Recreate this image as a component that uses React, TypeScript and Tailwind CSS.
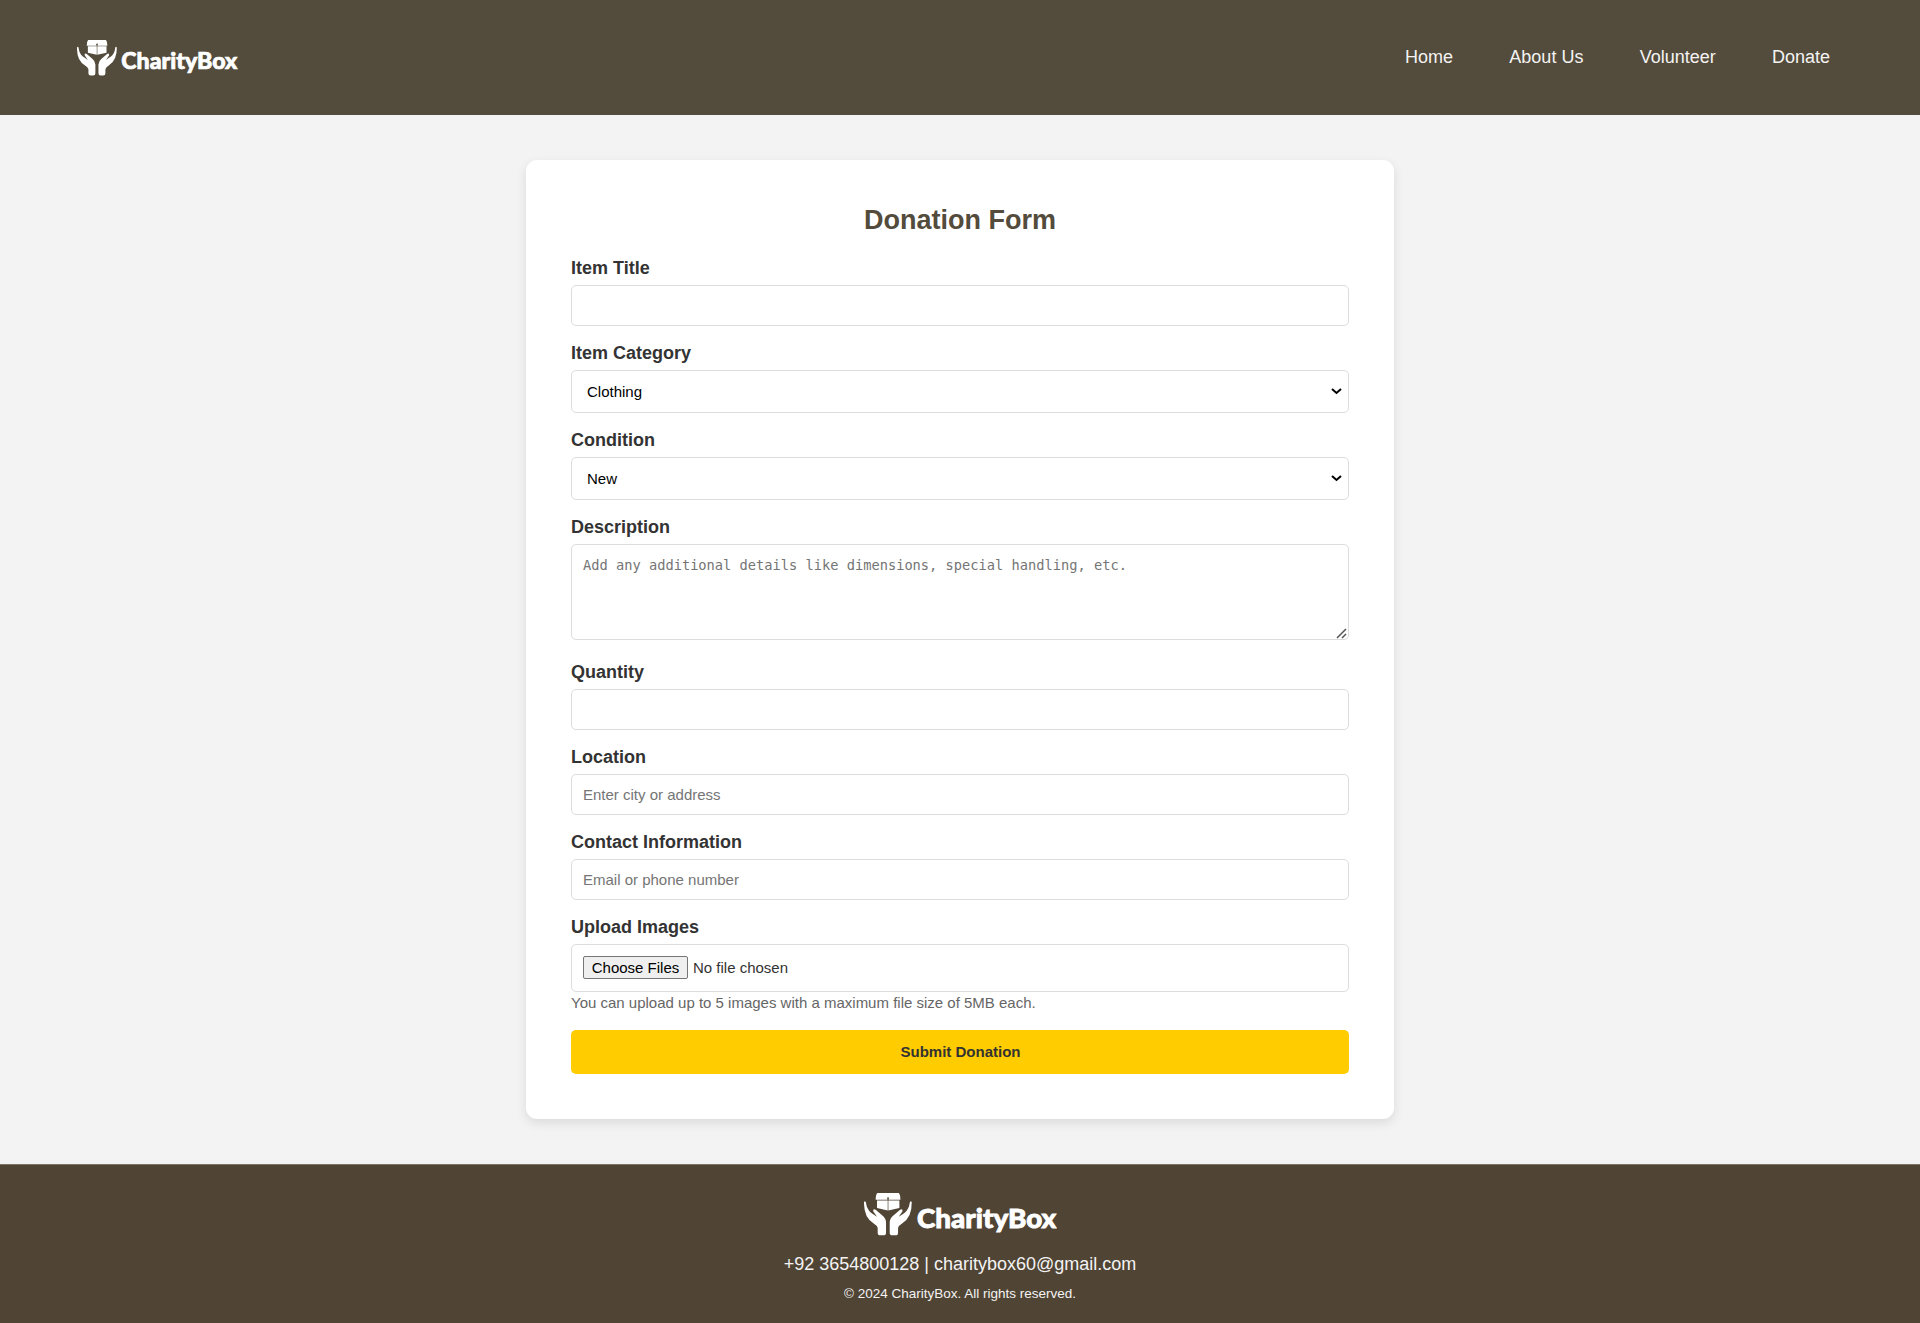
import React from "react";

function Logo({ className }: { className: string }) {
  return (
    <svg viewBox="25 25 578 128" preserveAspectRatio="none" className={className} fill="#fff" role="img" aria-label="CharityBox">
      <path d="M65 25H129Q134 30 134 45H60Q60 30 65 25Z" />
      <path d="M64 47.5H96V77L64 70Z M98 47.5H131V70L98 77Z" />
      <path d="M94.5 45V40L97 36L99.5 40V45Z" fill="#534b3b" />
      <path d="M25 52Q29 46 31 54Q33 72 46 84Q56 91 64 96L53 80Q51 70 60 75L80 92Q91 101 91 112V143Q91 151 83 151H74Q66 151 66 143V129Q64 122 54 116Q24 98 25 52Z" />
      <path d="M168 52Q164 46 162 54Q160 72 147 84Q137 91 129 96L140 80Q142 70 133 75L113 92Q102 101 102 112V143Q102 151 110 151H119Q127 151 127 143V129Q129 122 139 116Q169 98 168 52Z" />
      <text x="184" y="128" textLength="417" lengthAdjust="spacingAndGlyphs" fontFamily="Lato, sans-serif" fontWeight="900" fontSize="79" stroke="#fff" strokeWidth="2.5">CharityBox</text>
    </svg>
  );
}

const control = "block w-full rounded-[5px] border border-[#ddd] bg-white px-[11px] text-[15px] text-black placeholder:text-[#757575] outline-none";

function Field({ label, className, children }: { label: string; className: string; children: React.ReactNode }) {
  return (
    <div className={className}>
      <label className="block h-[28px] pt-px text-[18px] leading-[21px] font-bold text-[#333]">{label}</label>
      {children}
    </div>
  );
}

function Select({ value }: { value: string }) {
  return (
    <div className="relative">
      <select className="block h-[43px] w-full appearance-none rounded-[5px] border border-[#ddd] bg-white px-[15px] pt-[2px] text-[15px] text-black">
        <option>{value}</option>
      </select>
      <svg className="absolute top-[17px] right-[7px] h-[8px] w-[11px]" viewBox="0 0 11 8" fill="none" stroke="#000" strokeWidth="2">
        <path d="M1 2L5.5 6L10 2" />
      </svg>
    </div>
  );
}

export default function App() {
  return (
    <div className="flex h-[1323px] flex-col bg-[#f3f3f3] font-['Liberation_Sans',Arial,sans-serif]">
      <header className="flex h-[115px] shrink-0 items-start justify-between bg-[#534b3b] pt-[40px] pr-[90px] pl-[77px]">
        <Logo className="h-[36px] w-[161px]" />
        <nav className="flex gap-[56.25px] pt-[7px] text-[18px] leading-[21px] text-[#f3f3f3]">
          <a>Home</a>
          <a>About Us</a>
          <a>Volunteer</a>
          <a>Donate</a>
        </nav>
      </header>

      <main className="flex grow justify-center pt-[45px]">
        <form className="h-[959px] w-[868px] rounded-[11px] bg-white px-[45px] pt-[45px] shadow-[0_4px_11px_rgba(0,0,0,0.1)]">
          <h1 className="text-center text-[27px] leading-[31px] font-bold text-[#534b3b]">Donation Form</h1>
          <Field label="Item Title" className="mt-[21px]">
            <input className={`${control} h-[41px]`} />
          </Field>
          <Field label="Item Category" className="mt-[16px]">
            <Select value="Clothing" />
          </Field>
          <Field label="Condition" className="mt-[16px]">
            <Select value="New" />
          </Field>
          <Field label="Description" className="mt-[16px]">
            <div className="relative">
              <textarea
                className="block h-[96px] w-full resize-none rounded-[5px] border border-[#ddd] bg-white px-[11px] py-[11px] font-['DejaVu_Sans_Mono',monospace] text-[13.7px] leading-[18px] outline-none placeholder:text-[#757575]"
                placeholder="Add any additional details like dimensions, special handling, etc."
              />
              <svg className="absolute right-[2px] bottom-[1px] h-[11px] w-[11px]" viewBox="0 0 11 11" stroke="#555" strokeWidth="1.5" fill="none">
                <path d="M1 10L10 1M6 10L10 6" />
              </svg>
            </div>
          </Field>
          <Field label="Quantity" className="mt-[21px]">
            <input className={`${control} h-[41px]`} />
          </Field>
          <Field label="Location" className="mt-[16px]">
            <input className={`${control} h-[41px]`} placeholder="Enter city or address" />
          </Field>
          <Field label="Contact Information" className="mt-[16px]">
            <input className={`${control} h-[41px]`} placeholder="Email or phone number" />
          </Field>
          <Field label="Upload Images" className="mt-[16px]">
            <div className="flex h-[48px] items-start rounded-[5px] border border-[#ddd] px-[11px] pt-[11px] text-[15px] text-[#333]">
              <button type="button" className="h-[23px] w-[105px] rounded-[2px] border border-[#767676] bg-[#efefef] leading-[21px] text-black">Choose Files</button>
              <span className="ml-[5px] leading-[24px]">No file chosen</span>
            </div>
          </Field>
          <p className="text-[15px] leading-[21px] text-[#666]">You can upload up to 5 images with a maximum file size of 5MB each.</p>
          <button type="button" className="mt-[17px] block h-[44px] w-full rounded-[5px] bg-[#fc0] pl-px text-[15px] font-bold text-[#333]">Submit Donation</button>
        </form>
      </main>

      <footer className="flex h-[159px] shrink-0 flex-col items-center border-t border-[#7a7365] bg-[#504434] pt-[28px] text-[#f3f3f3]">
        <Logo className="h-[43px] w-[193px]" />
        <p className="mt-[18px] text-[18px] leading-[21px]">+92 3654800128 | charitybox60@gmail.com</p>
        <p className="mt-[11px] text-[13.5px] leading-[16px]">© 2024 CharityBox. All rights reserved.</p>
      </footer>
    </div>
  );
}
